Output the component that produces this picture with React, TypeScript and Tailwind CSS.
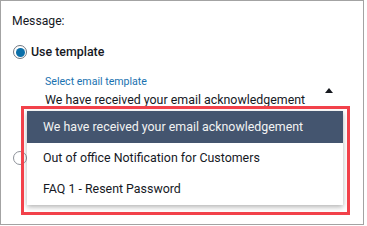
import React from 'react';

const options = [
    'We have received your email acknowledgement',
    'Out of office Notification for Customers',
    'FAQ 1 - Resent Password',
];

function Radio({ checked }: { checked?: boolean }) {
    if (checked) {
        return (
            <span className="flex items-center justify-center w-[14px] h-[14px] rounded-full border border-[#6f7680] bg-white">
                <span className="w-[9px] h-[9px] rounded-full bg-[#0a6fa9]" />
            </span>
        );
    }
    return <span className="block w-[14px] h-[14px] rounded-full border border-[#8d9199] bg-white" />;
}

export default function App() {
    const selected = 0;

    return (
        <div className="relative w-[367px] h-[226px] bg-white overflow-hidden" style={{ fontFamily: 'Roboto, "Liberation Sans", Arial, sans-serif' }}>
            <div className="w-[364px] h-[225px] border border-[#a3a3a3] pl-[11px] pt-[12px] text-[#16191f]">
                <div className="text-[12.2px] leading-[16px]">Message:</div>

                <div className="mt-[15px] flex items-center gap-[4px] h-[16px] pl-[1px]">
                    <Radio checked />
                    <span className="text-[12.4px] font-medium leading-[16px]">Use template</span>
                </div>

                <div className="mt-[15px] ml-[33px] w-[288px] flex items-center justify-between">
                    <div className="flex flex-col">
                        <span className="text-[10.6px] leading-[14px] text-[#1a72b0]">Select email template</span>
                        <span className="mt-[3px] text-[12.4px] leading-[16px]">We have received your email acknowledgement</span>
                    </div>
                    <span className="w-0 h-0 border-x-[4.5px] border-x-transparent border-b-[5px] border-b-[#16191f] -mt-[2px]" />
                </div>

                <div className="mt-[43px] h-[14px] pl-[1px] flex items-center">
                    <Radio />
                </div>
            </div>

            {/* dropdown menu over the content */}
            <div className="absolute left-[27px] top-[111px] w-[316px] bg-white shadow-[0_2px_5px_rgba(0,0,0,0.3)]">
                {options.map((o, i) => (
                    <div
                        key={o}
                        className={
                            i === selected
                                ? 'h-[32px] flex items-center pl-[16px] text-[12.4px] bg-[#44556f] text-[#f2f3f3]'
                                : 'h-[31px] flex items-center pl-[16px] text-[12.4px] text-[#16191f]'
                        }
                    >
                        {o}
                    </div>
                ))}
            </div>

            {/* red highlight annotation */}
            <div className="absolute left-[21px] top-[106px] w-[329px] h-[109px] border-[3px] border-[#f2414a] pointer-events-none" />
        </div>
    );
}
